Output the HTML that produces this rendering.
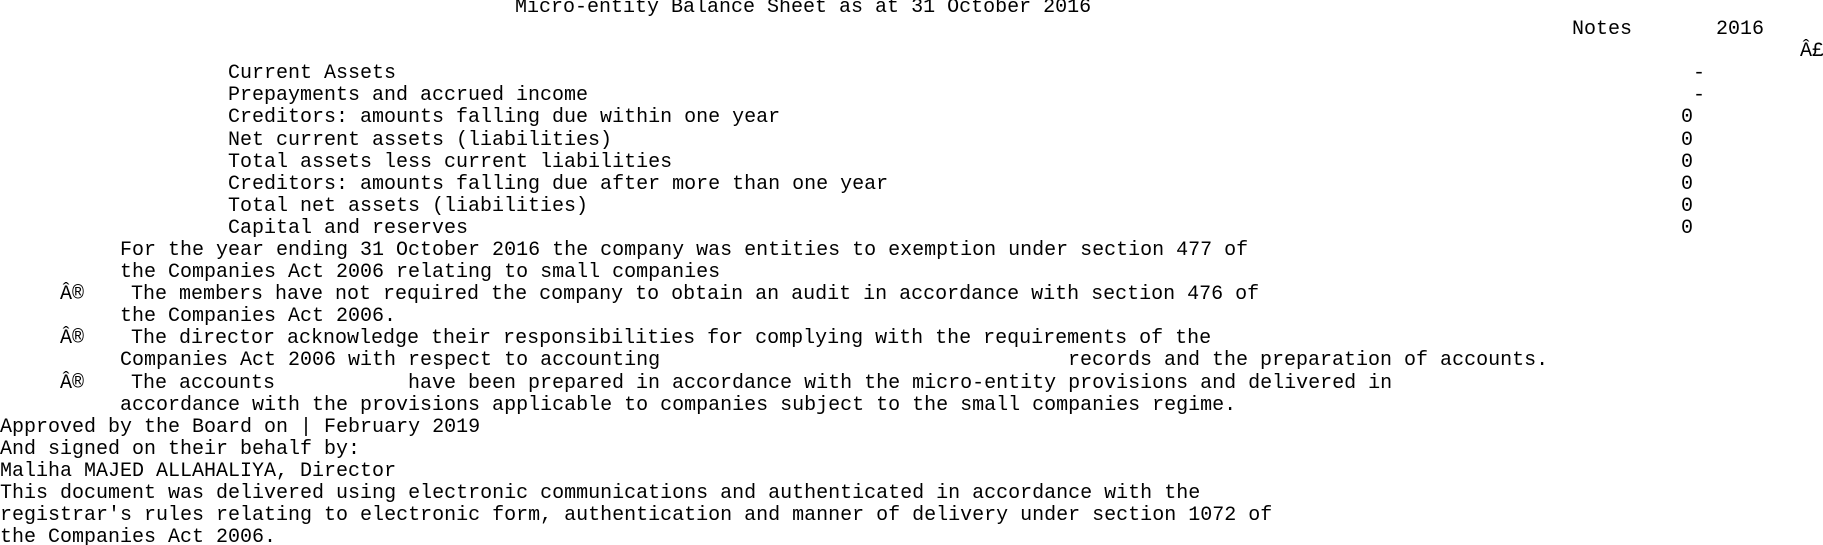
<!DOCTYPE html>
<html><head><meta charset="utf-8"><style>
html,body{margin:0;padding:0;background:#fff;width:1823px;height:545px;overflow:hidden;position:relative}
#w{position:absolute;left:0;top:1px;width:1823px;height:545px}
span{position:absolute;font-family:"Liberation Mono","DejaVu Sans Mono",monospace;font-size:20px;line-height:22px;color:#000;white-space:pre}
</style></head><body><div id="w">
<span style="left:515px;top:-4px">Micro-entity Balance Sheet as at 31 October 2016</span>
<span style="left:1572px;top:18px">Notes</span><span style="left:1716px;top:18px">2016</span>
<span style="left:1800px;top:40px">Â£</span>
<span style="left:228px;top:62px">Current Assets</span><span style="left:1693px;top:62px">-</span>
<span style="left:228px;top:84px">Prepayments and accrued income</span><span style="left:1693px;top:84px">-</span>
<span style="left:228px;top:106px">Creditors: amounts falling due within one year</span><span style="left:1681px;top:106px">0</span>
<span style="left:228px;top:129px">Net current assets (liabilities)</span><span style="left:1681px;top:129px">0</span>
<span style="left:228px;top:151px">Total assets less current liabilities</span><span style="left:1681px;top:151px">0</span>
<span style="left:228px;top:173px">Creditors: amounts falling due after more than one year</span><span style="left:1681px;top:173px">0</span>
<span style="left:228px;top:195px">Total net assets (liabilities)</span><span style="left:1681px;top:195px">0</span>
<span style="left:228px;top:217px">Capital and reserves</span><span style="left:1681px;top:217px">0</span>
<span style="left:120px;top:239px">For the year ending 31 October 2016 the company was entities to exemption under section 477 of</span>
<span style="left:120px;top:261px">the Companies Act 2006 relating to small companies</span>
<span style="left:60px;top:283px">Â®</span><span style="left:131px;top:283px">The members have not required the company to obtain an audit in accordance with section 476 of</span>
<span style="left:120px;top:305px">the Companies Act 2006.</span>
<span style="left:60px;top:327px">Â®</span><span style="left:131px;top:327px">The director acknowledge their responsibilities for complying with the requirements of the</span>
<span style="left:120px;top:349px">Companies Act 2006 with respect to accounting</span><span style="left:1068px;top:349px">records and the preparation of accounts.</span>
<span style="left:60px;top:372px">Â®</span><span style="left:131px;top:372px">The accounts</span><span style="left:408px;top:372px">have been prepared in accordance with the micro-entity provisions and delivered in</span>
<span style="left:120px;top:394px">accordance with the provisions applicable to companies subject to the small companies regime.</span>
<span style="left:0;top:416px">Approved by the Board on | February 2019</span>
<span style="left:0;top:438px">And signed on their behalf by:</span>
<span style="left:0;top:460px">Maliha MAJED ALLAHALIYA, Director</span>
<span style="left:0;top:482px">This document was delivered using electronic communications and authenticated in accordance with the</span>
<span style="left:0;top:504px">registrar's rules relating to electronic form, authentication and manner of delivery under section 1072 of</span>
<span style="left:0;top:526px">the Companies Act 2006.</span>
</div></body></html>
